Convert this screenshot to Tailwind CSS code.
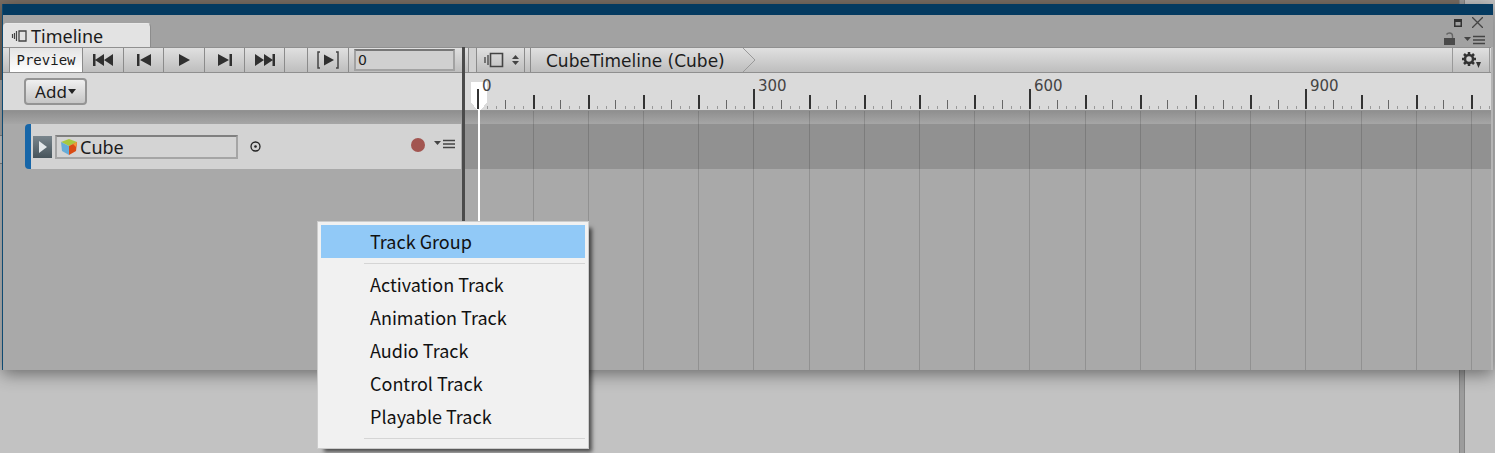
<!DOCTYPE html>
<html lang="en">
<head>
<meta charset="utf-8">
<title>Timeline</title>
<script src="https://cdn.jsdelivr.net/npm/@tailwindcss/browser@4"></script>
</head>
<body class="relative min-h-screen overflow-hidden bg-[#c2c2c2] font-['Noto_Sans',sans-serif] text-[#1c1c1c]">
  <!-- panels behind the floating window -->
  <div class="absolute inset-0 flex" aria-hidden="true">
    <div class="flex-1"><div class="h-20 bg-[#7a6e64]"></div><div class="h-14 w-1 border-b border-[#888888] bg-[#b0b0b0]"></div><div class="h-7 w-1 border-b border-[#888888] bg-[#d0d0d0]"></div></div>
    <div class="w-[6px] border-x border-[#858585] bg-[#9c9c9c]"></div>
    <div class="w-[30px]"></div>
  </div>

  <main class="relative mt-1 mr-[2px] ml-[2px] border-l border-[#0e4a72] bg-[#a9a9a9] shadow-[0_4px_16px_rgba(0,0,0,0.45)]">
    <div class="h-[11px] bg-[#043a60]"></div>

    <header class="flex h-8 items-end justify-between bg-[#a2a2a2]">
      <h1 class="flex h-6 w-[148px] items-center gap-1 rounded-t-sm border-t border-r border-[#e9e9e9] border-r-[#8c8c8c] bg-[#e3e3e3] pl-2 text-[18px] leading-6">
        <svg width="16" height="12" viewBox="0 0 16 12" fill="none" stroke="#444" aria-hidden="true"><path d="M1.500 4v4M3.500 3v6M5.500 1v10" stroke-width="1.200"/><path d="M8 1h7v10H8z" stroke-width="1.300"/></svg>
        Timeline
      </h1>
      <div class="flex flex-col items-end gap-1 pr-2 pb-[2px]">
        <div class="flex items-center gap-[10px]">
          <button aria-label="Maximize"><svg class="block" width="8" height="8" viewBox="0 0 8 8"><path d="M0 0h8v8H0zM1.500 3v3.500h5V3z" fill="#333" fill-rule="evenodd"/></svg></button>
          <button aria-label="Close" class="pr-[2px]"><svg class="block" width="11" height="11" viewBox="0 0 11 11" stroke="#444" stroke-width="1.300"><path d="M0 0l11 11M11 0L0 11"/></svg></button>
        </div>
        <div class="flex items-end gap-[9px]">
          <button aria-label="Lock"><svg class="block" width="12" height="13" viewBox="0 0 12 13"><path d="M1 6h11v7H1z" fill="#4a4a4a"/><path d="M3.500 2.500Q4.500 1 6.500 1Q9.500 1 9.500 4v2" fill="none" stroke="#666" stroke-width="1.400"/></svg></button>
          <button aria-label="Window options"><svg class="block" width="21" height="10" viewBox="0 0 21 10"><path d="M0 2h7L3.500 6z" fill="#444"/><path d="M9 1.500h12M9 5h12M9 8.500h12" stroke="#444" stroke-width="1.500"/></svg></button>
        </div>
      </div>
    </header>

    <div class="flex">
      <!-- track headers -->
      <section class="flex w-[459px] shrink-0 flex-col">
        <div class="flex h-[26px] items-stretch border-y border-t-[#909090] border-b-[#8f8f8f] bg-linear-to-b from-[#e0e0e0] to-[#bebebe] pl-[6px]">
          <button class="w-[74px] border-x border-[#8b8b8b] bg-linear-to-b from-[#e4e4e4] to-white font-['DejaVu_Sans_Mono',monospace] text-[14px]">Preview</button>
          <button aria-label="First frame" class="grid w-[41px] place-items-center border-r border-[#8b8b8b]"><svg width="20" height="12" viewBox="0 0 20 12" fill="#303030"><path d="M0 0h2.500v12H0zM11 0v12L2 6zM20 0v12L11 6z"/></svg></button>
          <button aria-label="Previous frame" class="grid w-10 place-items-center border-r border-[#8b8b8b]"><svg width="14" height="12" viewBox="0 0 14 12" fill="#303030"><path d="M0 0h2.500v12H0zM14 0v12L3 6z"/></svg></button>
          <button aria-label="Play" class="grid w-[41px] place-items-center border-r border-[#8b8b8b]"><svg width="11" height="12" viewBox="0 0 11 12" fill="#303030"><path d="M0 0l11 6L0 12z"/></svg></button>
          <button aria-label="Next frame" class="grid w-10 place-items-center border-r border-[#8b8b8b]"><svg width="14" height="12" viewBox="0 0 14 12" fill="#303030"><path d="M11.500 0H14v12h-2.500zM0 0v12l11-6z"/></svg></button>
          <button aria-label="Last frame" class="grid w-10 place-items-center border-r border-[#8b8b8b]"><svg width="20" height="12" viewBox="0 0 20 12" fill="#303030"><path d="M17.500 0H20v12h-2.500zM0 0v12l9-6zM9 0v12l9-6z"/></svg></button>
          <span class="w-[23px] border-r border-[#8b8b8b]"></span>
          <button aria-label="Play range" class="grid w-[41px] place-items-center border-r border-[#8b8b8b]"><svg width="22" height="18" viewBox="0 0 22 18" fill="none" stroke="#444" stroke-width="1.500"><path d="M3 1H1v16h2M19 1h2v16h-2"/><path d="M7 3.500v11L17 9z" fill="#303030" stroke="none"/></svg></button>
          <input aria-label="Current frame" value="0" class="my-[1px] mr-[7px] ml-[5px] min-w-0 flex-1 border-2 border-[#a2a2a2] border-t-[#777777] bg-[#d0d0d0] px-[2px] font-['DejaVu_Sans',sans-serif] text-[14px]">
        </div>
        <div class="h-[37px] bg-[#dadada] pt-[5px] pl-[21px]">
          <button class="flex h-[27px] w-[63px] items-center justify-center gap-px rounded border-2 border-[#949494] bg-linear-to-b from-[#f0f0f0] to-[#c6c6c6] text-[17px] leading-5">Add<svg width="8" height="5" viewBox="0 0 8 5" aria-hidden="true"><path d="M0 0h8L4 5z" fill="#222"/></svg></button>
        </div>
        <div class="h-[14px] border-t border-[#929292] bg-linear-to-b from-[#8f8f8f] to-[#a6a6a6]"></div>
        <div class="ml-[22px] mr-px flex h-[45px] items-center rounded-l-sm border-l-[6px] border-[#1766a8] bg-[#d3d3d3] pl-[2px]">
          <button aria-label="Expand track" class="grid h-[22px] w-[19px] place-items-center bg-linear-to-b from-[#7a868d] to-[#47545b]"><svg width="8" height="12" viewBox="0 0 8 12"><path d="M0 0l8 6-8 6z" fill="#e4e8ea"/></svg></button>
          <label class="ml-[3px] flex h-6 w-[183px] items-center border-2 border-[#a5a5a5] border-t-[#808080] bg-[#d4d4d4] pl-[3px]">
            <svg class="shrink-0" width="18" height="16" viewBox="0 0 18 16" aria-hidden="true"><path d="M9 0l8 3-8 4-8-4z" fill="#a9c83f"/><path d="M1 3l8 4v9l-7-4z" fill="#67acd8"/><path d="M17 3L9 7v9l7-4z" fill="#da4b13"/><path d="M13 5l4-2-1 5z" fill="#f39a35"/></svg>
            <input aria-label="Bound object" value="Cube" class="w-full min-w-0 bg-transparent pl-[2px] text-[18px] leading-5">
          </label>
          <button aria-label="Select object" class="ml-3"><svg class="block" width="11" height="11" viewBox="0 0 11 11"><circle cx="5.500" cy="5.500" r="4.500" fill="none" stroke="#222" stroke-width="1.300"/><circle cx="5.500" cy="5.500" r="1.300" fill="#222"/></svg></button>
          <span class="flex-1"></span>
          <button aria-label="Record" class="mb-[3px] size-[14px] rounded-full bg-[#a25550]"></button>
          <button aria-label="Track options" class="mr-[6px] mb-[6px] ml-[9px]"><svg class="block" width="21" height="10" viewBox="0 0 21 10"><path d="M0 2h7L3.500 6z" fill="#444"/><path d="M9 1.500h12M9 5h12M9 8.500h12" stroke="#444" stroke-width="1.500"/></svg></button>
        </div>
        <div class="h-[201px]"></div>
      </section>

      <div class="w-[3px] bg-[#4b4b4b]"></div>

      <!-- ruler and clips -->
      <section class="relative min-w-0 flex-1">
        <div class="flex h-[26px] items-stretch border-y border-t-[#909090] border-b-[#8f8f8f] bg-linear-to-b from-[#e0e0e0] to-[#bebebe] pl-[3px]">
          <button aria-label="Select timeline" class="flex w-[57px] items-center justify-end gap-2 border-x border-[#8b8b8b] pr-[5px] shadow-[inset_8px_0_0_-1px_#d0d0d0,inset_8px_0_0_#8b8b8b]">
            <svg width="20" height="16" viewBox="0 0 20 16" fill="none" stroke="#444" stroke-width="1.300"><path d="M1 5v6M4 3v10"/><path d="M6.500 1.500h12v13h-12z" stroke-width="1.600"/></svg>
            <svg width="7" height="10" viewBox="0 0 7 10" fill="#444"><path d="M0 4h7L3.500 0zM0 6h7l-3.500 4z"/></svg>
          </button>
          <nav class="flex items-center">
            <span class="mx-[5px] h-full w-px bg-[#8b8b8b]"></span>
            <a href="#" class="pt-[2px] pl-[10px] font-['DejaVu_Sans',sans-serif] text-[17px] leading-5">CubeTimeline (Cube)</a>
          </nav>
          <svg class="ml-4 shrink-0" width="16" height="24" viewBox="0 0 16 24" fill="none" stroke="#999"><path d="M2 0l12 12L2 24"/></svg>
          <span class="flex-1"></span>
          <button aria-label="Settings" class="mr-px grid w-[38px] place-items-center border-x border-[#999999]">
            <svg width="20" height="18" viewBox="0 0 20 18"><g transform="translate(8 8)"><circle r="4" fill="none" stroke="#333" stroke-width="2.500"/><path d="M0-7v3M0 4v3M-7 0h3M4 0h3M-5-5l2 2M3 3l2 2M-5 5l2-2M3-3l2-2" stroke="#333" stroke-width="2.500"/></g><path d="M15 11h5l-2.500 6z" fill="#333"/></svg>
          </button>
        </div>
        <div class="h-[37px] bg-[#dadada]"></div>
        <div class="h-[14px] border-t border-[#929292] bg-linear-to-b from-[#8f8f8f] to-[#a6a6a6]"></div>
        <div class="h-[45px] bg-[#919191]"></div>
        <svg id="ruler" class="absolute top-[26px] left-0 h-[297px] w-full overflow-hidden font-['DejaVu_Sans',sans-serif] text-[15px]" shape-rendering="crispEdges" aria-label="Timeline ruler"></svg>
      </section>
      <div class="w-[2px] bg-[#b5b5b5]"></div>
    </div>
  </main>

  <div role="menu" class="absolute top-[221px] left-[317px] flex w-[272px] flex-col border border-[#cccccc] bg-[#f1f1f1] p-[3px] pb-[9px] font-['Noto_Sans_CJK_TC',sans-serif] text-[18px] leading-[33px] text-[#111111] shadow-[5px_5px_4px_-2px_rgba(0,0,0,0.6)]">
    <button role="menuitem" class="bg-[#91c9f7] pl-[49px] text-left">Track Group</button>
    <hr class="mt-[5px] mb-1 ml-[43px] border-[#d5d5d5]">
    <button role="menuitem" class="pl-[49px] text-left">Activation Track</button>
    <button role="menuitem" class="pl-[49px] text-left">Animation Track</button>
    <button role="menuitem" class="pl-[49px] text-left">Audio Track</button>
    <button role="menuitem" class="pl-[49px] text-left">Control Track</button>
    <button role="menuitem" class="pl-[49px] text-left">Playable Track</button>
    <hr class="mt-[5px] ml-[43px] border-[#d5d5d5]">
  </div>

  <script>
    // 300 frames span 276 pixels; a small tick marks every 10 frames.
    const ruler = document.getElementById('ruler');
    function drawRuler() {
      const end = window.innerWidth - 469;
      let out = '<path d="M6 9h16v20l-6 8h-4l-6-8z" fill="#fff"/>';
      for (let f = 0; 12.4 + f * 0.92 < end; f += 10) {
        const x = Math.round(12.4 + f * 0.92);
        const h = f % 300 === 0 ? 20 : f % 60 === 0 ? 14 : f % 30 === 0 ? 9 : 3;
        const w = f % 60 === 0 ? 2 : 1;
        out += `<rect x="${x}" y="${36 - h}" width="${w}" height="${h}" fill="${w === 2 ? '#333' : h === 9 ? '#666' : '#999'}"/>`;
        if (f && w === 2) out += `<rect x="${x}" y="38" width="1" height="259" fill="#000" fill-opacity=".14"/>`;
        if (f % 300 === 0 && x + 45 < end) out += `<text x="${x + 5}" y="18" fill="#444">${f}</text>`;
      }
      ruler.innerHTML = out + '<rect x="13" y="37" width="2" height="260" fill="#fff"/>';
    }
    drawRuler();
    window.addEventListener('resize', drawRuler);
  </script>
</body>
</html>
